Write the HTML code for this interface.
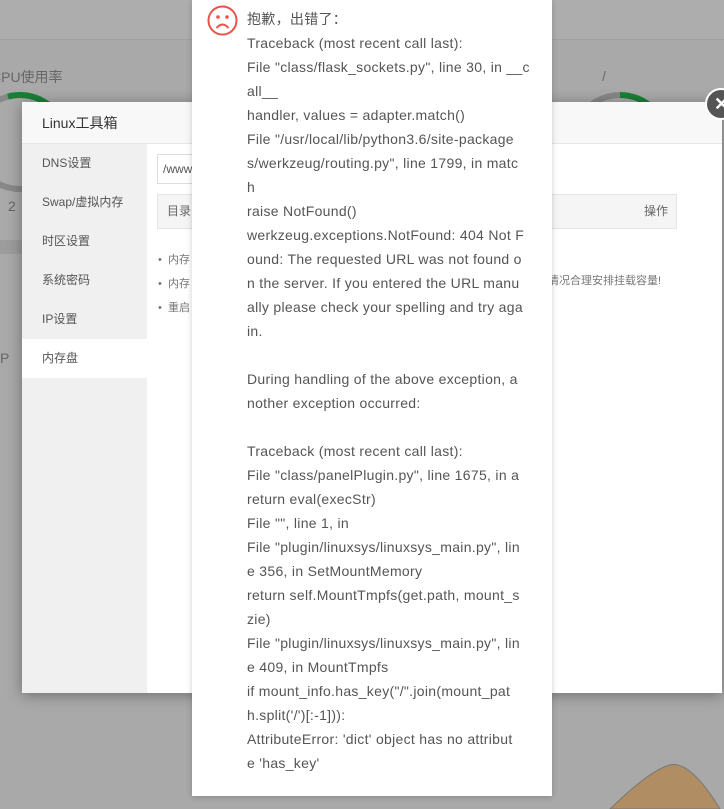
<!DOCTYPE html>
<html><head><meta charset="utf-8">
<style>
*{margin:0;padding:0;box-sizing:border-box}
html,body{width:724px;height:809px;overflow:hidden}
body{background:#a9a9a9;font-family:"Liberation Sans","Noto Sans CJK SC",sans-serif;position:relative}
.abs{position:absolute}
.modal{left:22px;top:102px;width:700px;height:591px;background:#fff;box-shadow:0 2px 14px rgba(0,0,0,.35)}
.mh{height:42px;background:#f8f8f8;border-bottom:1px solid #e5e5e5;font-size:14px;color:#333;line-height:42px;padding-left:20px}
.side{left:0;top:42px;width:125px;height:549px;background:#f0f0f0}
.side div{height:39px;line-height:39px;padding-left:20px;font-size:12px;color:#555}
.side .on{background:#fff}
.err{left:192px;top:0;width:360px;height:796px;background:#fff;box-shadow:0 1px 6px rgba(0,0,0,.2)}
.err .t{position:absolute;left:55px;top:7px;font-size:14px;line-height:24px;color:#555;white-space:nowrap;letter-spacing:0.3px}
</style></head><body>
<div class="abs" style="left:0;top:0;width:724px;height:40px;background:#adadad;border-bottom:1px solid #a0a0a0"></div>
<div class="abs" style="left:-9px;top:67px;font-size:14px;color:#666">CPU使用率</div>
<div class="abs" style="left:-30px;top:92px;width:100px;height:100px;border:6px solid #888;border-radius:50%;border-top-color:#1a7f37;border-right-color:#888;transform:rotate(30deg)"></div>
<div class="abs" style="left:8px;top:198px;font-size:14px;color:#666">2</div>
<div class="abs" style="left:570px;top:92px;width:100px;height:100px;border:6px solid #888;border-radius:50%;border-right-color:#1a7f37;transform:rotate(-45deg)"></div>
<div class="abs" style="left:602px;top:68px;font-size:14px;color:#666">/</div>
<div class="abs" style="left:0;top:240px;width:22px;height:14px;background:#9c9c9c"></div>
<div class="abs" style="left:0;top:350px;font-size:14px;color:#666">P</div>
<svg class="abs" style="left:600px;top:760px" width="124" height="49"><path d="M10 49 Q50 10 70 5 Q90 0 120 49 Z" fill="#b08d62" stroke="#777" stroke-width="1"/></svg>
<div class="abs modal">
  <div class="mh">Linux工具箱</div>
  <div class="abs side">
    <div>DNS设置</div><div>Swap/虚拟内存</div><div>时区设置</div><div>系统密码</div><div>IP设置</div><div class="on">内存盘</div>
  </div>
  <div class="abs" style="left:135px;top:52px;width:100px;height:30px;border:1px solid #ddd;font-size:12px;color:#555;line-height:28px;padding-left:5px">/www</div>
  <div class="abs" style="left:135px;top:92px;width:520px;height:35px;border:1px solid #e5e5e5;background:#f5f5f5;font-size:12px;color:#666;line-height:33px;padding-left:9px">目录<span style="position:absolute;right:8px">操作</span></div>
  <div class="abs" style="left:136px;top:146px;font-size:11px;color:#777;line-height:24px">•&nbsp; 内存<br>•&nbsp; 内存<br>•&nbsp; 重启</div>
  <div class="abs" style="left:526px;top:170px;font-size:11px;color:#777">情况合理安排挂载容量!</div>
</div>
<div class="abs" style="left:705px;top:88px;width:32px;height:32px;border-radius:50%;background:#555;border:2px solid #fff;color:#fff;font-size:18px;line-height:28px;padding-left:7px;font-weight:bold">✕</div>
<div class="abs err">
  <svg class="abs" style="left:15px;top:5px" width="31" height="31" viewBox="0 0 31 31"><circle cx="15.5" cy="15.5" r="14" fill="none" stroke="#e8534a" stroke-width="2"/><circle cx="11" cy="12" r="1.8" fill="#e8534a"/><circle cx="20" cy="12" r="1.8" fill="#e8534a"/><path d="M9.5 23 Q15.5 16 21.5 23" fill="none" stroke="#e8534a" stroke-width="2"/></svg>
  <div class="t">抱歉，出错了：<br>Traceback (most recent call last):<br>File "class/flask_sockets.py", line 30, in __c<br>all__<br>handler, values = adapter.match()<br>File "/usr/local/lib/python3.6/site-package<br>s/werkzeug/routing.py", line 1799, in matc<br>h<br>raise NotFound()<br>werkzeug.exceptions.NotFound: 404 Not F<br>ound: The requested URL was not found o<br>n the server. If you entered the URL manu<br>ally please check your spelling and try aga<br>in.<br>&nbsp;<br>During handling of the above exception, a<br>nother exception occurred:<br>&nbsp;<br>Traceback (most recent call last):<br>File "class/panelPlugin.py", line 1675, in a<br>return eval(execStr)<br>File "", line 1, in<br>File "plugin/linuxsys/linuxsys_main.py", lin<br>e 356, in SetMountMemory<br>return self.MountTmpfs(get.path, mount_s<br>zie)<br>File "plugin/linuxsys/linuxsys_main.py", lin<br>e 409, in MountTmpfs<br>if mount_info.has_key("/".join(mount_pat<br>h.split('/')[:-1])):<br>AttributeError: 'dict' object has no attribut<br>e 'has_key'</div>
</div>
</body></html>
